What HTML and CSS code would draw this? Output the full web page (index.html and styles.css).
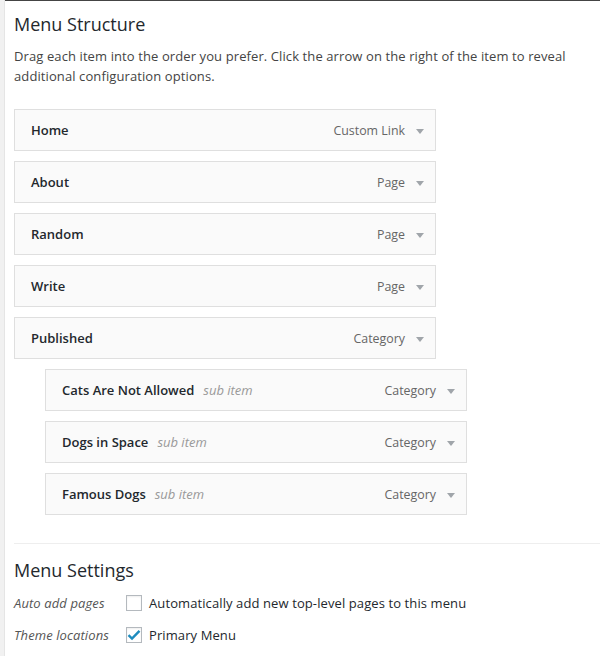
FILE: index.html
```html
<!DOCTYPE html>
<html>
<head>
<meta charset="utf-8">
<link rel="stylesheet" href="styles.css">
</head>
<body>
<div class="frame">
  <div class="strip"></div>
  <main class="main">
    <h3 class="heading">Menu Structure</h3>
    <p class="desc">Drag each item into the order you prefer. Click the arrow on the right of the item to reveal additional configuration options.</p>
    <ul class="menu">
      <li class="item"><span class="title">Home</span><span class="type">Custom Link</span><span class="arrow"></span></li>
      <li class="item"><span class="title">About</span><span class="type">Page</span><span class="arrow"></span></li>
      <li class="item"><span class="title">Random</span><span class="type">Page</span><span class="arrow"></span></li>
      <li class="item"><span class="title">Write</span><span class="type">Page</span><span class="arrow"></span></li>
      <li class="item"><span class="title">Published</span><span class="type">Category</span><span class="arrow"></span></li>
      <li class="item sub"><span class="title">Cats Are Not Allowed</span><span class="subtag">sub item</span><span class="type">Category</span><span class="arrow"></span></li>
      <li class="item sub"><span class="title">Dogs in Space</span><span class="subtag">sub item</span><span class="type">Category</span><span class="arrow"></span></li>
      <li class="item sub"><span class="title">Famous Dogs</span><span class="subtag">sub item</span><span class="type">Category</span><span class="arrow"></span></li>
    </ul>
    <div class="settings">
      <h3 class="heading">Menu Settings</h3>
      <div class="row">
        <span class="label">Auto add pages</span>
        <span class="box"></span>
        <span class="text">Automatically add new top-level pages to this menu</span>
      </div>
      <div class="row">
        <span class="label">Theme locations</span>
        <span class="box"><svg width="14" height="12" viewBox="0 0 14 12"><path d="M1.5 6.2 L5 9.6 L12.5 1.8" fill="none" stroke="#1e8cbe" stroke-width="2.4"/></svg></span>
        <span class="text">Primary Menu</span>
      </div>
    </div>
  </main>
</div>
</body>
</html>
```

FILE: styles.css
```css
html, body {
  margin: 0;
  padding: 0;
  background: #fff;
}
body {
  font-family: "Open Sans", "Noto Sans", sans-serif;
  color: #23282d;
  font-size: 13px;
}
.frame {
  display: flex;
  min-height: 656px;
}
.strip {
  width: 4px;
  background: #f1f1f1;
  border-right: 1px solid #e5e5e5;
  flex: none;
}
.main {
  flex: 1;
  border-top: 1px solid #444;
  padding: 11px 0 0 9px;
}
.heading {
  margin: 0;
  font-size: 18px;
  font-weight: 400;
  line-height: 24px;
  color: #23282d;
}
.desc {
  margin: 10px 0 0;
  line-height: 20px;
  color: #444;
  letter-spacing: 0.1px;
  padding-right: 20px;
}
.menu {
  list-style: none;
  margin: 23px 0 0;
  padding: 0;
  display: flex;
  flex-direction: column;
  gap: 10px;
}
.item {
  box-sizing: border-box;
  width: 422px;
  height: 42px;
  border: 1px solid #dfdfdf;
  background: #fafafa;
  display: flex;
  align-items: center;
  padding: 0 11px 0 16px;
}
.item.sub {
  margin-left: 31px;
}
.title {
  font-weight: 600;
  color: #23282d;
}
.subtag {
  font-style: italic;
  color: #999;
  margin-left: 9px;
}
.type {
  margin-left: auto;
  color: #666;
  font-size: 12.4px;
}
.arrow {
  margin-left: 11px;
  width: 0;
  height: 0;
  border-left: 4px solid transparent;
  border-right: 4px solid transparent;
  border-top: 5px solid #a0a5aa;
  margin-top: 2px;
}
.settings {
  margin-top: 28px;
  border-top: 1px solid #eee;
  padding-top: 14px;
}
.row {
  display: flex;
  align-items: center;
  height: 32px;
  letter-spacing: 0.1px;
}
.row:first-of-type {
  margin-top: 5px;
}
.label {
  width: 112px;
  font-style: italic;
  color: #555;
  flex: none;
}
.box {
  box-sizing: border-box;
  width: 16px;
  height: 16px;
  border: 1px solid #b4b9be;
  background: #fff;
  box-shadow: inset 0 1px 2px rgba(0,0,0,0.07);
  display: flex;
  align-items: center;
  justify-content: center;
  flex: none;
}
.text {
  margin-left: 7px;
  color: #23282d;
}
```
